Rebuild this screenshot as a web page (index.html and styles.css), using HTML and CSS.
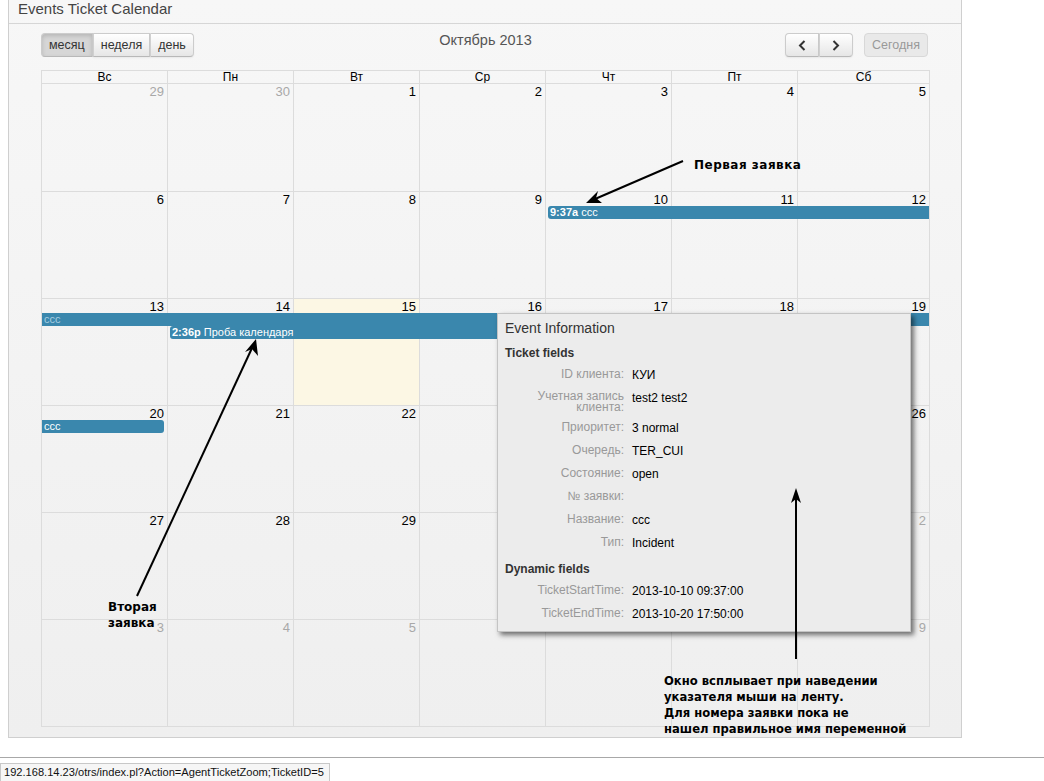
FILE: index.html
```html
<!DOCTYPE html>
<html lang="ru">
<head>
<meta charset="utf-8">
<title>Events Ticket Calendar</title>
<link rel="stylesheet" href="styles.css">
</head>
<body>
<div class="page">
  <div class="panel">
    <div class="panel-head">Events Ticket Calendar</div>
    <div class="cal">
      <div class="toolbar">
        <div class="btn-group">
          <span class="btn active">месяц</span><span class="btn">неделя</span><span class="btn">день</span>
        </div>
        <div class="cal-title">Октябрь 2013</div>
        <div class="right-tools">
          <div class="btn-group">
            <span class="btn icon"><svg width="8" height="11" viewBox="0 0 8 11"><path d="M6.5 1 L2 5.5 L6.5 10" fill="none" stroke="#333" stroke-width="2"/></svg></span><span class="btn icon"><svg width="8" height="11" viewBox="0 0 8 11"><path d="M1.5 1 L6 5.5 L1.5 10" fill="none" stroke="#333" stroke-width="2"/></svg></span>
          </div>
          <span class="btn disabled">Сегодня</span>
        </div>
      </div>

      <div class="dow">
        <div>Вс</div><div>Пн</div><div>Вт</div><div>Ср</div><div>Чт</div><div>Пт</div><div>Сб</div>
      </div>

      <div class="month">
        <div class="week">
          <div class="day c1"></div><div class="day c2"></div><div class="day c3"></div><div class="day c4"></div><div class="day c5"></div><div class="day c6"></div><div class="day c7"></div>
          <div class="num c1 other">29</div><div class="num c2 other">30</div><div class="num c3">1</div><div class="num c4">2</div><div class="num c5">3</div><div class="num c6">4</div><div class="num c7">5</div>
        </div>
        <div class="week">
          <div class="day c1"></div><div class="day c2"></div><div class="day c3"></div><div class="day c4"></div><div class="day c5"></div><div class="day c6"></div><div class="day c7"></div>
          <div class="num c1">6</div><div class="num c2">7</div><div class="num c3">8</div><div class="num c4">9</div><div class="num c5">10</div><div class="num c6">11</div><div class="num c7">12</div>
          <div class="ev r1 from5 to8 start"><b>9:37a</b> ccc</div>
        </div>
        <div class="week">
          <div class="day c1"></div><div class="day c2"></div><div class="day c3 today"></div><div class="day c4"></div><div class="day c5"></div><div class="day c6"></div><div class="day c7"></div>
          <div class="num c1">13</div><div class="num c2">14</div><div class="num c3">15</div><div class="num c4">16</div><div class="num c5">17</div><div class="num c6">18</div><div class="num c7">19</div>
          <div class="ev r1 from1 to8 faint">ccc</div>
          <div class="ev r2 from2 to6 start"><b>2:36p</b> Проба календаря</div>
        </div>
        <div class="week">
          <div class="day c1"></div><div class="day c2"></div><div class="day c3"></div><div class="day c4"></div><div class="day c5"></div><div class="day c6"></div><div class="day c7"></div>
          <div class="num c1">20</div><div class="num c2">21</div><div class="num c3">22</div><div class="num c4">23</div><div class="num c5">24</div><div class="num c6">25</div><div class="num c7">26</div>
          <div class="ev r1 from1 to2 end">ccc</div>
        </div>
        <div class="week">
          <div class="day c1"></div><div class="day c2"></div><div class="day c3"></div><div class="day c4"></div><div class="day c5"></div><div class="day c6"></div><div class="day c7"></div>
          <div class="num c1">27</div><div class="num c2">28</div><div class="num c3">29</div><div class="num c4">30</div><div class="num c5">31</div><div class="num c6 other">1</div><div class="num c7 other">2</div>
        </div>
        <div class="week">
          <div class="day c1"></div><div class="day c2"></div><div class="day c3"></div><div class="day c4"></div><div class="day c5"></div><div class="day c6"></div><div class="day c7"></div>
          <div class="num c1 other">3</div><div class="num c2 other">4</div><div class="num c3 other">5</div><div class="num c4 other">6</div><div class="num c5 other">7</div><div class="num c6 other">8</div><div class="num c7 other">9</div>
        </div>
      </div>
    </div>
  </div>

  <div class="bottom-rule"></div>
  <div class="status">192.168.14.23/otrs/index.pl?Action=AgentTicketZoom;TicketID=5</div>

  <div class="popup">
    <div class="popup-title">Event Information</div>
    <div class="popup-sec">Ticket fields</div>
    <div class="fields">
      <div class="lbl">ID клиента:</div><div class="val">КУИ</div>
      <div class="lbl two">Учетная запись клиента:</div><div class="val">test2 test2</div>
      <div class="lbl">Приоритет:</div><div class="val">3 normal</div>
      <div class="lbl">Очередь:</div><div class="val">TER_CUI</div>
      <div class="lbl">Состояние:</div><div class="val">open</div>
      <div class="lbl">№ заявки:</div><div class="val"></div>
      <div class="lbl">Название:</div><div class="val">ccc</div>
      <div class="lbl">Тип:</div><div class="val">Incident</div>
    </div>
    <div class="popup-sec dyn">Dynamic fields</div>
    <div class="fields">
      <div class="lbl">TicketStartTime:</div><div class="val">2013-10-10 09:37:00</div>
      <div class="lbl">TicketEndTime:</div><div class="val">2013-10-20 17:50:00</div>
    </div>
  </div>

  <svg class="arrows" width="1044" height="781" viewBox="0 0 1044 781">
    <line x1="683" y1="161" x2="595" y2="199" stroke="#000" stroke-width="2"/>
    <polygon points="586,203 598,191 596,198 602,203" fill="#000"/>
    <line x1="137" y1="596" x2="252" y2="348" stroke="#000" stroke-width="2"/>
    <polygon points="256,339 258,356 252,349 245,352" fill="#000"/>
    <line x1="796" y1="659" x2="796" y2="498" stroke="#000" stroke-width="2"/>
    <polygon points="796,488 801,503 796,499 791,503" fill="#000"/>
  </svg>

  <div class="note note-first">Первая заявка</div>
  <div class="note note-second">Вторая<br>заявка</div>
  <div class="note note-big">Окно всплывает при наведении<br>указателя мыши на ленту.<br>Для номера заявки пока не<br>нашел правильное имя переменной</div>
</div>
</body>
</html>
```
FILE: styles.css
```css
* { box-sizing: border-box; }
html, body { margin: 0; padding: 0; background: #fff; }
body { font-family: "Liberation Sans", Arial, sans-serif; color: #000; }

.page { position: relative; width: 1044px; height: 781px; overflow: hidden; }

.panel {
  margin-left: 8px;
  width: 954px;
  height: 738px;
  border: 1px solid #cfcfcf;
  border-top: none;
  background: linear-gradient(#f7f7f7, #efefef);
}
.panel-head {
  height: 24px;
  border-bottom: 1px solid #d6d6d6;
  padding-left: 9px;
  font-size: 15px;
  line-height: 18px;
  color: #444;
}

.cal { margin-left: 32px; width: 889px; }

.toolbar {
  margin-top: 9px;
  height: 24px;
  display: flex;
  align-items: center;
  position: relative;
}
.btn-group { display: flex; }
.btn {
  display: inline-flex;
  align-items: center;
  justify-content: center;
  height: 24px;
  padding: 0 7px;
  font-size: 12.5px;
  color: #333;
  background: linear-gradient(#ffffff, #e6e6e6);
  border: 1px solid #cccccc;
  border-bottom-color: #b8b8b8;
  box-shadow: inset 0 1px 0 rgba(255,255,255,.3), 0 1px 2px rgba(0,0,0,.06);
}
.btn-group .btn + .btn { border-left: 1px solid #d0d0d0; }
.btn-group .btn:first-child { border-radius: 4px 0 0 4px; }
.btn-group .btn:last-child { border-radius: 0 4px 4px 0; }
.btn.active {
  background: #d6d6d6;
  box-shadow: inset 0 2px 4px rgba(0,0,0,.15);
}
.btn.icon { width: 34px; padding: 0; }
.btn.disabled {
  margin-left: 11px;
  width: 64px;
  padding: 0;
  border-radius: 4px;
  background: #e9e9e9;
  border-color: #d8d8d8;
  color: #999;
  box-shadow: none;
}
.cal-title {
  position: absolute;
  left: 0; right: 0; top: 0;
  text-align: center;
  font-size: 14.5px;
  line-height: 15px;
  color: #555;
  pointer-events: none;
}
.right-tools { margin-left: auto; display: flex; margin-right: 2px; }

.dow {
  margin-top: 13px;
  display: grid;
  grid-template-columns: repeat(6, 126px) 1fr;
  border-top: 1px solid #dcdcdc;
  border-right: 1px solid #dcdcdc;
  height: 13px;
}
.dow div {
  border-left: 1px solid #dcdcdc;
  text-align: center;
  font-size: 12px;
  line-height: 12px;
}

.month {
  display: grid;
  grid-template-rows: 108px repeat(5, 107px);
  border-right: 1px solid #dcdcdc;
  border-bottom: 1px solid #dcdcdc;
}
.week {
  display: grid;
  grid-template-columns: repeat(6, 126px) 1fr;
  grid-template-rows: 15px 13px 13px 1fr;
}
.day {
  grid-row: 1 / -1;
  border-left: 1px solid #dcdcdc;
  border-top: 1px solid #dcdcdc;
}
.day.today { background: #fcf7e4; }
.c1 { grid-column: 1; } .c2 { grid-column: 2; } .c3 { grid-column: 3; }
.c4 { grid-column: 4; } .c5 { grid-column: 5; } .c6 { grid-column: 6; } .c7 { grid-column: 7; }
.num {
  grid-row: 1;
  text-align: right;
  padding: 2px 3px 0 0;
  font-size: 13px;
  line-height: 13px;
  color: #000;
}
.num.other { color: #a8a8a8; }

.ev {
  height: 13px;
  background: #3a87ad;
  color: #fff;
  font-size: 11px;
  line-height: 13px;
  padding-left: 2px;
  white-space: nowrap;
  overflow: hidden;
  margin-left: 1px;
}
.ev b { font-weight: 600; }
.ev.r1 { grid-row: 2; }
.ev.r2 { grid-row: 3; }
.from1 { grid-column-start: 1; } .from2 { grid-column-start: 2; } .from5 { grid-column-start: 5; }
.to2 { grid-column-end: 2; } .to6 { grid-column-end: 6; } .to8 { grid-column-end: 8; }
.ev.start { margin-left: 3px; border-radius: 3px 0 0 3px; }
.ev.end { margin-right: 3px; border-radius: 0 3px 3px 0; }
.ev.faint { color: #a6cde0; }

.bottom-rule {
  position: absolute;
  left: 0; top: 757px;
  width: 1044px;
  height: 1px;
  background: #a8a8a8;
}
.status {
  position: absolute;
  left: 0; top: 763px;
  width: 330px;
  height: 18px;
  border: 1px solid #c8c8c8;
  border-bottom: none;
  background: #f6f6f6;
  font-size: 11.1px;
  line-height: 17px;
  padding-left: 3px;
  color: #111;
  white-space: nowrap;
}

.popup {
  position: absolute;
  left: 497px; top: 313px;
  width: 414px; height: 319px;
  background: #ececec;
  border: 1px solid #c4c4c4;
  box-shadow: 3px 3px 5px rgba(0,0,0,.55);
  padding: 6px 0 0 7px;
}
.popup-title { font-size: 14px; line-height: 16px; color: #333; }
.popup-sec {
  margin-top: 10px;
  font-size: 12px;
  font-weight: bold;
  line-height: 14px;
  color: #333;
}
.popup-sec.dyn { margin-top: 12px; }
.fields {
  margin-top: 8px;
  display: grid;
  grid-template-columns: 119px 1fr;
  column-gap: 8px;
  row-gap: 9px;
  font-size: 12px;
}
.lbl { text-align: right; color: #999; line-height: 11px; padding-top: 1px; }
.lbl.two { padding-top: 0; margin-bottom: -1px; }
.val { color: #000; line-height: 14px; min-height: 14px; }

.arrows { position: absolute; left: 0; top: 0; pointer-events: none; }

.note {
  position: absolute;
  font-family: "DejaVu Sans", Verdana, sans-serif;
  font-weight: bold;
  font-size: 12px;
  line-height: 16px;
  color: #000;
}
.note-first { left: 694px; top: 157px; letter-spacing: 0.5px; }
.note-second { left: 108px; top: 599px; }
.note-big { left: 664px; top: 673px; font-size: 11.6px; }
```
